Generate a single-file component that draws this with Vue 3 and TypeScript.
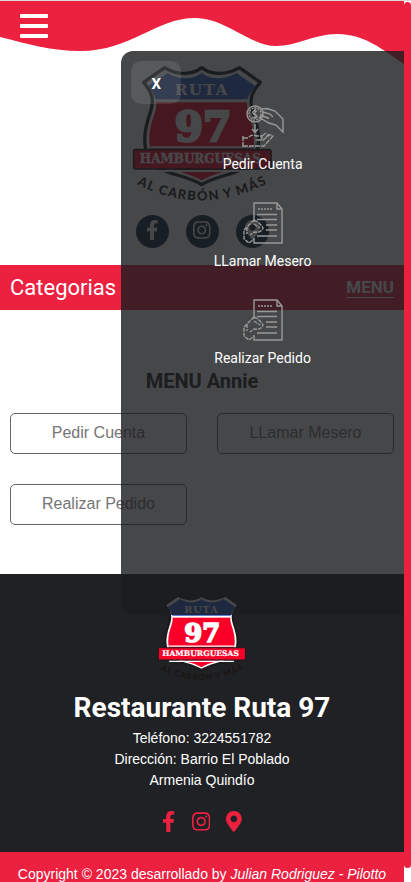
<script setup lang="ts">
import { ref } from 'vue'
import { h, type FunctionalComponent } from 'vue'

interface Action {
  label: string
  icon: 'pay' | 'note'
}

const actions: Action[] = [
  { label: 'Pedir Cuenta', icon: 'pay' },
  { label: 'LLamar Mesero', icon: 'note' },
  { label: 'Realizar Pedido', icon: 'note' },
]

const open = ref(true)

const shield =
  'M275 67 C248 88 205 92 164 67 L101 111 C124 140 134 160 122 198 C108 240 92 290 118 342 C142 386 226 386 275 418 C324 386 408 386 432 342 C458 290 442 240 428 198 C416 160 426 140 451 111 L388 67 C346 92 302 88 275 67 Z'

/* Brand shield, shared by the heading and the footer */
const BrandLogo: FunctionalComponent<{ uid: string }> = (props) =>
  h('svg', { viewBox: '60 50 435 420', role: 'img', 'aria-label': 'Ruta 97' }, [
    h('defs', [
      h('clipPath', { id: `${props.uid}-clip` }, [
        h('path', { d: shield, transform: 'translate(22 21) scale(.92)' }),
      ]),
      h('path', { id: `${props.uid}-arc`, d: 'M75 414 Q275 518 479 411' }),
    ]),
    h('path', { d: shield, fill: '#fff', stroke: '#1b1b1d', 'stroke-width': 10, 'stroke-linejoin': 'round' }),
    h('g', { 'clip-path': `url(#${props.uid}-clip)` }, [
      h('rect', { x: 80, y: 60, width: 390, height: 102, fill: '#2f5cc8' }),
      h('rect', { x: 80, y: 171, width: 390, height: 250, fill: '#fa0029' }),
    ]),
    h('path', { d: 'M122 306H428M122 377H428', stroke: '#fff', 'stroke-width': 6 }),
    h('rect', { x: 71, y: 313, width: 412, height: 58, rx: 5, fill: '#fa0029', stroke: '#1b1b1d', 'stroke-width': 5 }),
    h('g', { 'text-anchor': 'middle', fill: '#fff', 'font-family': '"DejaVu Serif", serif', 'font-weight': 700 }, [
      h('text', { x: 275, y: 150, 'font-size': 46, 'letter-spacing': 4 }, 'RUTA'),
      h('text', { x: 279, y: 286, 'font-size': 122, stroke: '#fff', 'stroke-width': 8 }, '97'),
      h('text', { x: 271, y: 354, 'font-size': 36, stroke: '#fff', 'stroke-width': 1 }, 'HAMBURGUESAS'),
    ]),
    h('text', { fill: '#1b1512', 'font-family': 'Lato, sans-serif', 'font-weight': 900, 'font-size': 39, 'letter-spacing': 4, 'text-anchor': 'middle' }, [
      h('textPath', { href: `#${props.uid}-arc`, startOffset: '50%' }, 'AL CARBÓN Y MÁS'),
    ]),
  ])
BrandLogo.props = ['uid']

const paths = {
  facebook:
    'M279.14 288l14.22-92.66h-88.91v-60.13c0-25.35 12.42-50.06 52.24-50.06h40.42V6.26S260.43 0 225.36 0c-73.22 0-121.08 44.38-121.08 124.72v70.62H22.89V288h81.39v224h100.17V288z',
  instagram:
    'M224.1 141c-63.6 0-114.9 51.3-114.9 114.9s51.3 114.9 114.9 114.9S339 319.5 339 255.9 287.7 141 224.1 141zm0 189.600c-41.100 0-74.700-33.500-74.700-74.700s33.500-74.700 74.700-74.700 74.700 33.500 74.700 74.700-33.600 74.700-74.700 74.700zm146.400-194.300c0 14.900-12 26.800-26.800 26.800-14.900 0-26.800-12-26.800-26.800s12-26.800 26.800-26.800 26.800 12 26.800 26.800zm76.100 27.200c-1.700-35.900-9.900-67.700-36.200-93.900-26.200-26.200-58-34.400-93.900-36.200-37-2.100-147.900-2.100-184.900 0-35.800 1.700-67.600 9.900-93.900 36.100s-34.400 58-36.200 93.900c-2.100 37-2.100 147.900 0 184.900 1.700 35.900 9.900 67.700 36.200 93.900s58 34.400 93.900 36.200c37 2.100 147.900 2.100 184.900 0 35.900-1.700 67.700-9.900 93.900-36.200 26.200-26.200 34.400-58 36.200-93.900 2.100-37 2.100-147.800 0-184.800zM398.800 388c-7.800 19.600-22.900 34.700-42.600 42.600-29.500 11.700-99.500 9-132.100 9s-102.700 2.600-132.100-9c-19.600-7.800-34.700-22.900-42.600-42.600-11.700-29.500-9-99.500-9-132.100s-2.600-102.700 9-132.100c7.800-19.600 22.900-34.700 42.600-42.600 29.500-11.700 99.500-9 132.100-9s102.700-2.600 132.100 9c19.600 7.800 34.700 22.900 42.600 42.600 11.700 29.500 9 99.500 9 132.100s2.700 102.700-9 132.100z',
  pin: 'M172.268 501.670C26.970 291.031 0 269.413 0 192 0 85.961 85.961 0 192 0s192 85.961 192 192c0 77.413-26.970 99.031-172.268 309.670-9.535 13.774-29.930 13.773-39.464 0zM192 272c44.183 0 80-35.817 80-80s-35.817-80-80-80-80 35.817-80 80 35.817 80 80 80z',
}
</script>

<template>
  <div class="window">
    <div class="page">
      <header class="top">
        <svg class="wave" viewBox="0 0 404 64" preserveAspectRatio="none" aria-hidden="true">
          <path d="M0 0V36C28 43 52 50 80 50C132 50 155 17 195 17C226 17 250 45 276 45C297 45 314 33 337 33C364 33 382 48 404 63V0Z" />
        </svg>
        <button class="burger" type="button" aria-label="Abrir menú" @click="open = true">
          <span></span><span></span><span></span>
        </button>
      </header>

      <section class="brand">
        <BrandLogo class="logo" uid="main" />
        <nav class="social" aria-label="Redes sociales">
          <a href="#" aria-label="Facebook"><svg viewBox="0 0 320 512"><path :d="paths.facebook" /></svg></a>
          <a href="#" aria-label="Instagram"><svg viewBox="0 0 448 512"><path :d="paths.instagram" /></svg></a>
          <a href="#" aria-label="Ubicación"><svg viewBox="0 0 384 512"><path :d="paths.pin" /></svg></a>
        </nav>
      </section>

      <div class="bar">
        <span class="bar-title">Categorias</span>
        <a href="#menu" class="bar-link">MENU</a>
      </div>

      <main id="menu" class="menu">
        <h2>MENU Annie</h2>
        <div class="options">
          <button v-for="a in actions" :key="a.label" type="button">{{ a.label }}</button>
        </div>
      </main>

      <footer class="footer">
        <BrandLogo class="logo-small" uid="foot" />
        <h1>Restaurante Ruta 97</h1>
        <p>Teléfono: 3224551782</p>
        <p>Dirección: Barrio El Poblado</p>
        <p>Armenia Quindío</p>
        <nav class="links" aria-label="Contacto">
          <a href="#" aria-label="Facebook"><svg viewBox="0 0 320 512"><path :d="paths.facebook" /></svg></a>
          <a href="#" aria-label="Instagram"><svg viewBox="0 0 448 512"><path :d="paths.instagram" /></svg></a>
          <a href="#" aria-label="Ubicación"><svg viewBox="0 0 384 512"><path :d="paths.pin" /></svg></a>
        </nav>
      </footer>
      <div class="copy">Copyright © 2023 desarrollado by <em>Julian Rodriguez - Pilotto</em></div>

      <aside v-if="open" class="drawer">
        <button class="close" type="button" @click="open = false">X</button>
        <a v-for="a in actions" :key="a.label" href="#" class="item">
          <svg v-if="a.icon === 'pay'" viewBox="0 0 42 42" aria-hidden="true">
            <circle cx="13" cy="9" r="8" />
            <circle cx="13" cy="9" r="6" stroke-dasharray="2 1" />
            <path d="M15 6.500C13 5 10.500 6 11 8S15 9.500 15 11.500S12 13.500 10.500 12M13 4V14" />
            <path d="M19 4L25 3.500L33 6L41 14V27L34 20L27 18L19 13.500C17.500 12 19 10 21 11L27 13.500M21 7L28 9L31 12" />
            <path d="M13 19V27M10 24L13 27.500L16 24" />
            <path d="M1 31V42M1 41H22L31 31C29 29 27 30 25 32L21 35H13M1 33H6C9 29 12 30 15 31H19C21 32 20 34 18 35M24 32L27 29M20 31L24 28" stroke-dasharray="5 1" />
          </svg>
          <svg v-else viewBox="0 0 42 42" aria-hidden="true">
            <path d="M12 20V1H35L40 7V41H12V36" />
            <path d="M35 1V7H40" />
            <path d="M16 7H31" stroke-dasharray="2 1" />
            <path d="M15 12.500H35M15 17.500H35M24 23H35M24 28H35M15 34H35" />
            <path d="M12 18L2 28V37L7 41L12 37M5 25V32M12 18C17 20 20 24 21 26C20 29 17 31 12 30L8 33M12 22L18 26" stroke-dasharray="4 1" />
          </svg>
          <span>{{ a.label }}</span>
        </a>
      </aside>
    </div>
    <div class="track" aria-hidden="true"><div class="thumb"></div></div>
  </div>
</template>

<style>
body {
  margin: 0;
  background: #fff;
}
</style>

<style scoped>
.window {
  box-sizing: border-box;
  display: grid;
  grid-template-columns: minmax(0, 1fr) 7px;
  height: 100vh;
  overflow: hidden;
  border-top: 1px solid #d8d8d8;
  font-family: Roboto, sans-serif;
  color: #202124;
}
.page {
  position: relative;
  display: flex;
  flex-direction: column;
  overflow: hidden;
}
.page > * {
  flex-shrink: 0;
}
.track {
  background: #fff;
}
.thumb {
  height: calc(100% - 15px);
  margin-top: 1px;
  border-radius: 4px;
  background: #ec203f;
}
.top {
  position: relative;
  padding: 13px 20px;
}
.wave {
  position: absolute;
  inset: 0 0 auto;
  display: block;
  width: 100%;
  height: 64px;
  fill: #ec203f;
}
.burger {
  position: relative;
  display: flex;
  flex-direction: column;
  gap: 6px;
  width: 28px;
  padding: 0;
  border: 0;
  background: none;
  cursor: pointer;
}
.burger span {
  width: 100%;
  height: 4px;
  border-radius: 1px;
  background: #fff;
}
.brand {
  display: flex;
  flex-direction: column;
  align-items: center;
  gap: 13px;
  padding: 11px 0 17px;
}
.logo {
  width: 145px;
  height: 140px;
}
.social {
  display: flex;
  gap: 17px;
}
.social a {
  display: grid;
  place-items: center;
  width: 33px;
  height: 33px;
  border-radius: 50%;
  background: #0b2a3b;
}
.social svg {
  height: 20px;
  margin-bottom: 3px;
  fill: #fff;
}
.bar {
  display: flex;
  align-items: center;
  justify-content: space-between;
  height: 45px;
  padding: 0 10px;
  background: #ec203f;
  color: #fff;
}
.bar-title {
  font-size: 22px;
}
.bar-link {
  border-bottom: 1px solid #fff;
  color: #fff;
  font-size: 17px;
  font-weight: 700;
  line-height: 20px;
  text-decoration: none;
}
.menu {
  padding: 59px 10px 49px;
}
.menu h2 {
  margin: 0 0 20px;
  font-size: 20px;
  line-height: 24px;
  text-align: center;
}
.options {
  display: grid;
  grid-template-columns: 1fr 1fr;
  gap: 30px;
}
.options button {
  height: 41px;
  padding: 0 0 2px;
  border: 1px solid #666;
  border-radius: 5px;
  background: #fff;
  color: #757575;
  font: 16px "Liberation Sans", Arial, sans-serif;
}
.footer {
  display: flex;
  flex-direction: column;
  align-items: center;
  padding: 18px 10px 20px;
  background: #202124;
  color: #fff;
}
.logo-small {
  width: 92px;
  height: 89px;
}
.footer h1 {
  margin: 10px 0 3px;
  font-size: 28px;
  line-height: 34px;
}
.footer p,
.copy {
  margin: 0;
  font: 14px/21px "Liberation Sans", Arial, sans-serif;
  text-align: center;
}
.links {
  display: flex;
  gap: 16px;
  margin-top: 20px;
}
.links a {
  display: block;
}
.links svg {
  display: block;
  height: 21px;
  fill: #ec203f;
}
.copy {
  padding: 12px 10px;
  background: #ec203f;
  color: #fff;
}
.drawer {
  position: absolute;
  top: 50px;
  right: 0;
  box-sizing: border-box;
  display: flex;
  flex-direction: column;
  align-items: center;
  gap: 29px;
  width: 70%;
  height: 64%;
  padding-top: 54px;
  border-radius: 12px 0 0 12px;
  background: rgba(27, 28, 31, 0.81);
}
.close {
  position: absolute;
  top: 10px;
  left: 10px;
  width: 50px;
  height: 43px;
  padding: 2px 0 0;
  border: 0;
  border-radius: 10px;
  background: rgba(255, 255, 255, 0.1);
  color: #fff;
  font: 700 15px Roboto, sans-serif;
}
.item {
  display: flex;
  flex-direction: column;
  align-items: center;
  gap: 9px;
  color: #fff;
  font-size: 14px;
  font-weight: 400;
  line-height: 17px;
  text-decoration: none;
}
.item svg {
  width: 42px;
  height: 42px;
  overflow: visible;
  fill: none;
  stroke: #999;
  stroke-width: 1.4;
}
</style>
